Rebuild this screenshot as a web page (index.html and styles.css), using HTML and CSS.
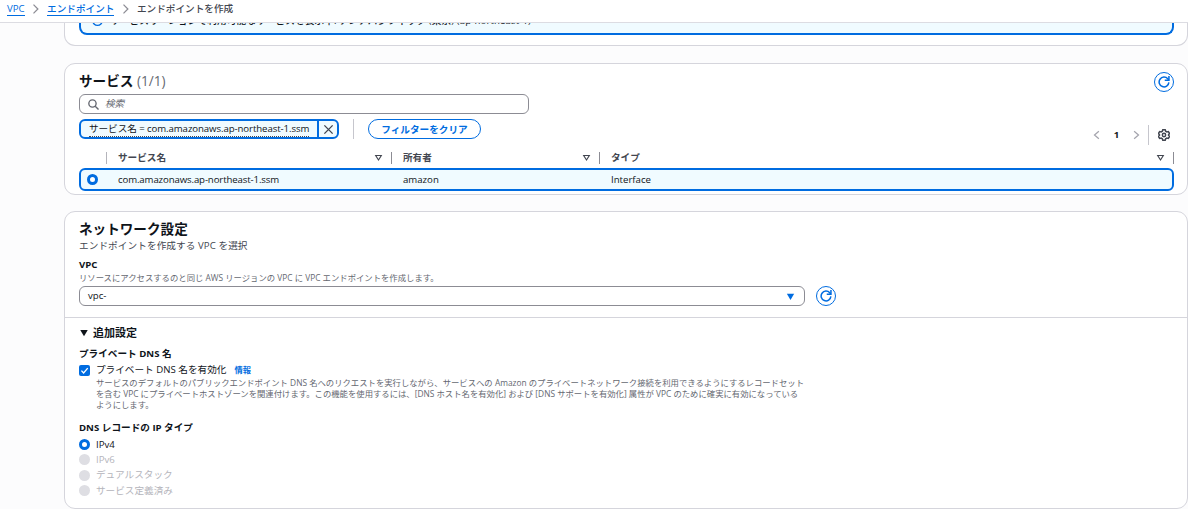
FILE: index.html
```html
<!DOCTYPE html>
<html lang="ja">
<head>
    <meta charset="UTF-8">
    <meta name="viewport" content="width=device-width, initial-scale=1.0">
    <title>エンドポイントを作成</title>
    <link rel="stylesheet" href="styles.css">
</head>
<body>

    <nav class="breadcrumb">
        <a href="#">VPC</a>
        <svg class="crumb-arrow" viewBox="0 0 16 16"><path d="M4 1l7 7-7 7"/></svg>
        <a href="#">エンドポイント</a>
        <svg class="crumb-arrow" viewBox="0 0 16 16"><path d="M4 1l7 7-7 7"/></svg>
        <span>エンドポイントを作成</span>
    </nav>

    <main class="content">
        <section class="card region-card">
            <div class="alert">
                <svg class="alert-icon" viewBox="0 0 16 16"><circle cx="8" cy="8" r="7"/><path d="M8 11V8H6M8 6V4"/></svg>
                <span>サービスリージョンで利用可能なサービスを表示中: アジアパシフィック (東京) (ap-northeast-1)</span>
            </div>
        </section>

        <section class="card services-card">
            <div class="services-header">
                <h2>サービス <span class="counter">(1/1)</span></h2>
                <button class="round-button">
                    <svg viewBox="0 0 16 16"><path d="M14.5 8.5A6.5 6.5 0 1 1 13 3.8L14.3 5.3"/><path d="M14.6 0v5.6H9"/></svg>
                </button>
            </div>

            <div class="tools">
                <div class="filters">
                    <div class="search">
                        <svg viewBox="0 0 16 16"><circle cx="6.5" cy="6.5" r="5.3"/><path d="M10.5 10.5L15.3 15.3"/></svg>
                        <span>検索</span>
                    </div>
                    <div class="token-row">
                        <div class="token">
                            <span class="token-label"><span>サービス名 = com.amazonaws.ap-northeast-1.ssm</span></span>
                            <span class="token-close">
                                <svg viewBox="0 0 16 16"><path d="M2 2l12 12M14 2L2 14"/></svg>
                            </span>
                        </div>
                        <div class="clear-wrap">
                            <button class="clear-button">フィルターをクリア</button>
                        </div>
                    </div>
                </div>
                <div class="pagination">
                    <svg class="page-arrow" viewBox="0 0 16 16"><path d="M11 2L4 8l7 6"/></svg>
                    <b>1</b>
                    <svg class="page-arrow" viewBox="0 0 16 16"><path d="M5 2l7 6-7 6"/></svg>
                    <span class="settings">
                        <svg viewBox="0 0 16 16"><path d="M6.4 1h3.2l.6 2 1.6.9 2-.5 1.6 2.7L14 7.6v.8l1.4 1.5-1.6 2.7-2-.5-1.6.9-.6 2H6.4l-.6-2-1.6-.9-2 .5L.6 9.9 2 8.4v-.8L.6 6.1l1.6-2.7 2 .5L5.8 3z"/><circle cx="8" cy="8" r="2.2"/></svg>
                    </span>
                </div>
            </div>

            <div class="table">
                <div class="row head">
                    <span class="select"></span>
                    <span class="cell">サービス名<svg class="sort" viewBox="0 0 16 16"><path d="M3 4.5h10L8 12.5z"/></svg></span>
                    <span class="cell">所有者<svg class="sort" viewBox="0 0 16 16"><path d="M3 4.5h10L8 12.5z"/></svg></span>
                    <span class="cell">タイプ<svg class="sort" viewBox="0 0 16 16"><path d="M3 4.5h10L8 12.5z"/></svg></span>
                </div>
                <div class="row selected">
                    <span class="select"><i class="radio checked"></i></span>
                    <span class="cell service-name">com.amazonaws.ap-northeast-1.ssm</span>
                    <span class="cell">amazon</span>
                    <span class="cell">Interface</span>
                </div>
            </div>
        </section>

        <section class="card network-card">
            <div class="network-main">
                <h2>ネットワーク設定</h2>
                <p class="description">エンドポイントを作成する VPC を選択</p>
                <h4 class="vpc-label">VPC</h4>
                <p class="hint">リソースにアクセスするのと同じ AWS リージョンの VPC に VPC エンドポイントを作成します。</p>
                <div class="vpc-row">
                    <div class="select-box">
                        <span>vpc-</span>
                        <svg viewBox="0 0 16 16"><path d="M1.5 3h13L8 14z"/></svg>
                    </div>
                    <button class="round-button">
                        <svg viewBox="0 0 16 16"><path d="M14.5 8.5A6.5 6.5 0 1 1 13 3.8L14.3 5.3"/><path d="M14.6 0v5.6H9"/></svg>
                    </button>
                </div>
            </div>

            <div class="additional">
                <h3><svg viewBox="0 0 16 16"><path d="M2 3h12L8 13z"/></svg>追加設定</h3>
                <h4>プライベート DNS 名</h4>
                <div class="option dns-option">
                    <span class="checkbox"><svg viewBox="0 0 16 16"><path d="M3.5 8.2l3.2 3.3 6-7"/></svg></span>
                    <span>プライベート DNS 名を有効化</span>
                    <a class="info" href="#">情報</a>
                </div>
                <p class="hint dns-hint">サービスのデフォルトのパブリックエンドポイント DNS 名へのリクエストを実行しながら、サービスへの Amazon のプライベートネットワーク接続を利用できるようにするレコードセット<br>を含む VPC にプライベートホストゾーンを関連付けます。この機能を使用するには、[DNS ホスト名を有効化] および [DNS サポートを有効化] 属性が VPC のために確実に有効になっている<br>ようにします。</p>
                <h4 class="record-label">DNS レコードの IP タイプ</h4>
                <div class="option"><i class="radio checked"></i>IPv4</div>
                <div class="option disabled"><i class="radio"></i>IPv6</div>
                <div class="option disabled"><i class="radio"></i>デュアルスタック</div>
                <div class="option disabled"><i class="radio"></i>サービス定義済み</div>
            </div>
        </section>
    </main>

</body>
</html>
```
FILE: styles.css
```css
* {
    box-sizing: border-box;
}

body {
    margin: 0;
    height: 509px;
    overflow: hidden;
    display: flex;
    flex-direction: column;
    background-color: #fcfcfd;
    color: #0f141a;
    font-family: "Open Sans", "Noto Sans CJK JP", sans-serif;
    font-size: 9.63px;
    line-height: 14px;
}

h2, h3, h4, p {
    margin: 0;
}

svg {
    display: block;
    flex: none;
    fill: none;
    stroke: currentColor;
    stroke-width: 2;
}

a {
    color: #006ce0;
}

/* breadcrumb */
.breadcrumb {
    flex: none;
    height: 23px;
    padding: 1px 0 0 7px;
    display: flex;
    align-items: flex-start;
    background-color: #fff;
    border-bottom: 1px solid #dcdce2;
    font-weight: 500;
    color: #424650;
    line-height: 15px;
}

.breadcrumb a {
    height: 15px;
    text-decoration: none;
    border-bottom: 1px solid #006ce0;
}

.crumb-arrow {
    width: 10px;
    height: 10px;
    margin: 3px 6px 0 6.5px;
    color: #8c8c94;
}

/* cards */
.content {
    flex: none;
    width: 1124px;
    margin-left: 64px;
}

.card {
    background-color: #fff;
    border: 1px solid #d5d5dc;
    border-radius: 11px;
}

.region-card {
    height: 23px;
    padding: 0 13px 0 14px;
    border-top: none;
    border-radius: 0 0 11px 11px;
    overflow: hidden;
}

.alert {
    height: 24px;
    margin-top: -12px;
    padding: 3px 11px 0;
    display: flex;
    background-color: #f0fbff;
    border: 2px solid #006ce0;
    border-top: none;
    border-radius: 0 0 8px 8px;
    font-weight: 500;
    letter-spacing: 0.12px;
}

.alert-icon {
    width: 11px;
    height: 11px;
    margin: 1px 7px 0 0;
    color: #006ce0;
}

h2 {
    font-size: 13.6px;
    line-height: 18px;
}

.counter {
    color: #656871;
    font-weight: 400;
}

.services-card {
    height: 132px;
    margin-top: 17px;
    padding: 8px 13px 0 14px;
}

.services-header {
    height: 22px;
    display: flex;
    justify-content: space-between;
}

.round-button {
    width: 20px;
    height: 20px;
    padding: 0;
    display: flex;
    align-items: center;
    justify-content: center;
    color: #006ce0;
    background-color: #fff;
    border: 1.5px solid #006ce0;
    border-radius: 50%;
}

.round-button svg {
    width: 12px;
    height: 12px;
}

/* search and filter tokens */
.tools {
    display: flex;
    justify-content: space-between;
    align-items: flex-end;
}

.search {
    width: 450px;
    height: 20px;
    padding: 0 8px;
    display: flex;
    align-items: center;
    border: 1px solid #8c8c94;
    border-radius: 6px;
    color: #656871;
    font-style: italic;
}

.search svg {
    width: 11px;
    height: 11px;
    margin-right: 6px;
}

.token-row {
    display: flex;
    margin-top: 5px;
}

.token {
    width: 260px;
    height: 20px;
    display: flex;
    background-color: #f0fbff;
    border: 2px solid #006ce0;
    border-radius: 6px;
}

.token-label {
    flex: 1;
    padding: 1px 0 0 8px;
    white-space: nowrap;
    letter-spacing: -0.08px;
}

.token-label span {
    display: inline-block;
    border-bottom: 1px dotted #424650;
}

.token-close {
    width: 20px;
    display: flex;
    align-items: center;
    justify-content: center;
    border-left: 2px solid #006ce0;
    color: #424650;
}

.token-close svg {
    width: 11px;
    height: 11px;
}

.clear-wrap {
    margin-left: 14px;
    padding-left: 14px;
    border-left: 1px solid #c6c6cd;
}

.clear-button {
    width: 113px;
    height: 20px;
    padding: 0;
    color: #006ce0;
    background-color: #fff;
    border: 1.5px solid #006ce0;
    border-radius: 10px;
    font: bold 9.63px "Open Sans", "Noto Sans CJK JP", sans-serif;
}

.pagination {
    display: flex;
    align-items: center;
    height: 20px;
    margin: 0 4px -6px 0;
}

.pagination b {
    width: 29px;
    text-align: center;
}

.page-arrow {
    width: 10px;
    height: 10px;
    color: #a4a4ad;
}

.settings {
    height: 20px;
    margin-left: 7px;
    padding-left: 9px;
    display: flex;
    align-items: center;
    border-left: 1px solid #c6c6cd;
    color: #424650;
}

.settings svg {
    width: 12px;
    height: 12px;
}

/* services table */
.table {
    margin-top: 7px;
}

.row {
    display: grid;
    grid-template-columns: 28px 285px 208px 1fr;
    align-items: center;
}

.head {
    height: 22px;
    padding-top: 1px;
    color: #424650;
    font-weight: bold;
}

.head .select {
    height: 12px;
    border-right: 1px solid #b4b4bb;
}

.head .cell {
    height: 12px;
    padding-left: 11px;
    display: flex;
    justify-content: space-between;
    align-items: center;
    border-right: 1px solid #8c8c94;
}

.cell {
    padding-left: 12px;
}

.service-name {
    letter-spacing: -0.12px;
}

.sort {
    width: 9px;
    height: 9px;
    margin-right: 8px;
}

.selected {
    height: 23px;
    background-color: #f0fbff;
    border: 2px solid #006ce0;
    border-radius: 6px;
    grid-template-columns: 25px 285px 208px 1fr;
}

.selected .select {
    padding-left: 6px;
}

.radio {
    display: block;
    flex: none;
    width: 11px;
    height: 11px;
    border-radius: 50%;
    background-color: #dedee3;
}

.radio.checked {
    background-color: #fff;
    border: 3.5px solid #006ce0;
}

/* network settings */
.network-card {
    height: 298px;
    margin-top: 16px;
}

.network-main {
    height: 106px;
    padding: 8px 14px 0;
    border-bottom: 1px solid #d5d5dc;
}

.description {
    margin-top: 1px;
    color: #424650;
    letter-spacing: 0.08px;
}

h4 {
    font-size: 9.63px;
    line-height: 14px;
}

.vpc-label {
    margin-top: 5px;
}

.hint {
    color: #656871;
    font-size: 8.36px;
    line-height: 11px;
}

.vpc-row {
    display: flex;
    gap: 11px;
    margin-top: 3px;
}

.select-box {
    width: 726px;
    height: 20px;
    padding: 0 9px 0 8px;
    display: flex;
    align-items: center;
    justify-content: space-between;
    border: 1px solid #8c8c94;
    border-radius: 6px;
}

.select-box svg {
    width: 9px;
    height: 9px;
    fill: #006ce0;
    stroke: none;
}

.additional {
    padding: 7px 14px 0;
}

h3 {
    display: flex;
    align-items: center;
    font-size: 11px;
    line-height: 15px;
}

h3 svg {
    width: 10px;
    height: 10px;
    margin-right: 4px;
    fill: currentColor;
    stroke: none;
}

.additional h4 {
    margin-top: 7px;
}

.option {
    height: 15.3px;
    display: flex;
    align-items: center;
    gap: 6px;
}

.dns-option {
    margin-top: 2px;
    height: 14px;
}

.checkbox {
    width: 11px;
    height: 11px;
    background-color: #006ce0;
    border-radius: 2px;
    color: #fff;
}

.info {
    margin-left: 2px;
    font-size: 8.25px;
    font-weight: bold;
    text-decoration: none;
}

.dns-hint {
    padding-left: 17px;
    white-space: nowrap;
}

.additional .record-label {
    margin: 11px 0 2px;
}

.disabled {
    color: #b4b4bb;
}
```
